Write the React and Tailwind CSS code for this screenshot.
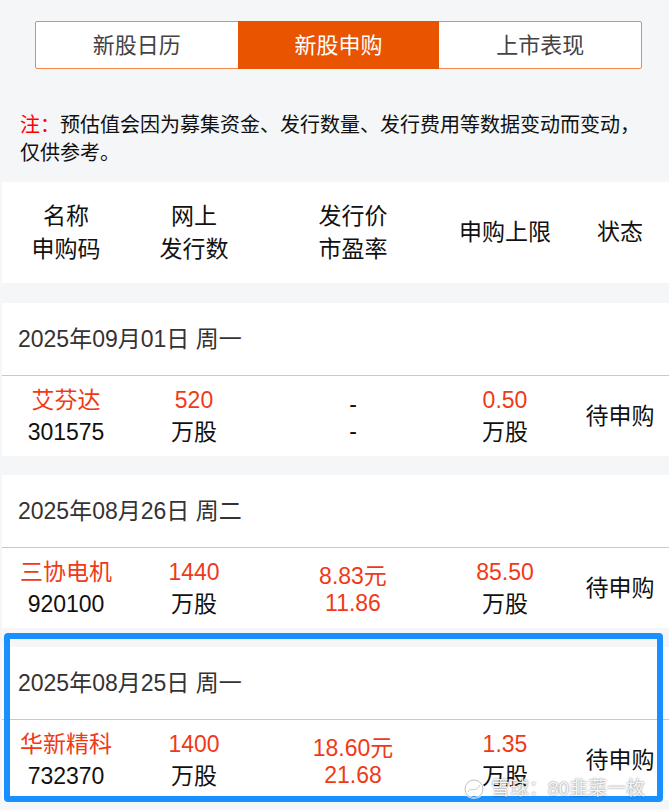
import React from "react";

const RED = "text-[#f03a17]";

function Section({ date, name, code, net, price, pe, limit, first }) {
  return (
    <div className={first ? "ml-[2px] mt-[20px] bg-white" : "ml-[2px] mt-[19px] bg-white"}>
      <div className="h-[72px] flex items-center pl-[16px] text-[23px] text-[#333]">{date}</div>
      <div className="h-px bg-[#c9c9c9]" />
      <div className="h-[80px] grid grid-cols-[128px_128px_190px_114px_1fr] items-center text-[23px] text-[#111]">
        <div className="flex flex-col items-center leading-[32px]">
          <span className={RED}>{name}</span>
          <span>{code}</span>
        </div>
        <div className="flex flex-col items-center leading-[32px]">
          <span className={RED}>{net}</span>
          <span>万股</span>
        </div>
        <div className="flex flex-col items-center leading-[27px] mt-[3px]">
          <span className={price === "-" ? "" : RED}>{price}</span>
          <span className={pe === "-" ? "" : RED}>{pe}</span>
        </div>
        <div className="flex flex-col items-center leading-[32px]">
          <span className={RED}>{limit}</span>
          <span>万股</span>
        </div>
        <div className="flex justify-center pl-[9px]">待申购</div>
      </div>
    </div>
  );
}

export default function App() {
  return (
    <div className="relative min-h-[810px] h-[810px] overflow-hidden bg-[#f5f6f8] font-['Liberation_Sans','Noto_Sans_CJK_SC',sans-serif]">
      <div className="pt-[21px]">
        <div className="ml-[35px] w-[607px] h-[48px] flex bg-white border border-[#f5874a] rounded-[2px] text-[22px] text-[#444]">
          <div className="flex-1 flex items-center justify-center">新股日历</div>
          <div className="flex-1 flex items-center justify-center bg-[#e85400] text-white -my-px">新股申购</div>
          <div className="flex-1 flex items-center justify-center">上市表现</div>
        </div>
      </div>

      <div className="mt-[42px] pl-[20px] pr-[20px] text-[20px] leading-[28px] text-[#111]">
        <span className="text-[#ff0000]">注：</span>预估值会因为募集资金、发行数量、发行费用等数据变动而变动，仅供参考。
      </div>

      <div className="ml-[2px] mt-[15px] h-[101px] bg-white grid grid-cols-[128px_128px_190px_114px_1fr] items-center text-[23px] text-[#111] leading-[33px]">
        <div className="flex flex-col items-center">
          <span>名称</span>
          <span>申购码</span>
        </div>
        <div className="flex flex-col items-center">
          <span>网上</span>
          <span>发行数</span>
        </div>
        <div className="flex flex-col items-center">
          <span>发行价</span>
          <span>市盈率</span>
        </div>
        <div className="flex justify-center">申购上限</div>
        <div className="flex justify-center pl-[9px]">状态</div>
      </div>

      <Section first date="2025年09月01日 周一" name="艾芬达" code="301575" net="520" price="-" pe="-" limit="0.50" />
      <Section date="2025年08月26日 周二" name="三协电机" code="920100" net="1440" price="8.83元" pe="11.86" limit="85.50" />
      <Section date="2025年08月25日 周一" name="华新精科" code="732370" net="1400" price="18.60元" pe="21.68" limit="1.35" />

      <div className="absolute left-[4px] top-[633px] w-[659px] h-[169px] border-[6px] border-[#1890ff] rounded-[4px]" />

      <div className="absolute left-[463px] top-[778px] flex items-center gap-[6px] text-[19px] leading-[22px] text-white/90 [text-shadow:0_0_2px_rgba(0,0,0,0.6)]">
        <svg width="22" height="22" viewBox="0 0 22 22" fill="none" className="opacity-85">
          <circle cx="11" cy="11" r="9" stroke="#ffffff" strokeWidth="2.2" />
          <circle cx="11" cy="11" r="9" stroke="#888" strokeWidth="0.6" />
          <path d="M5 14 C8 8, 12 16, 17 7" stroke="#ffffff" strokeWidth="2" />
          <path d="M5 14 C8 8, 12 16, 17 7" stroke="#888" strokeWidth="0.5" />
        </svg>
        <span>雪球：80韭菜一枚</span>
      </div>
    </div>
  );
}
